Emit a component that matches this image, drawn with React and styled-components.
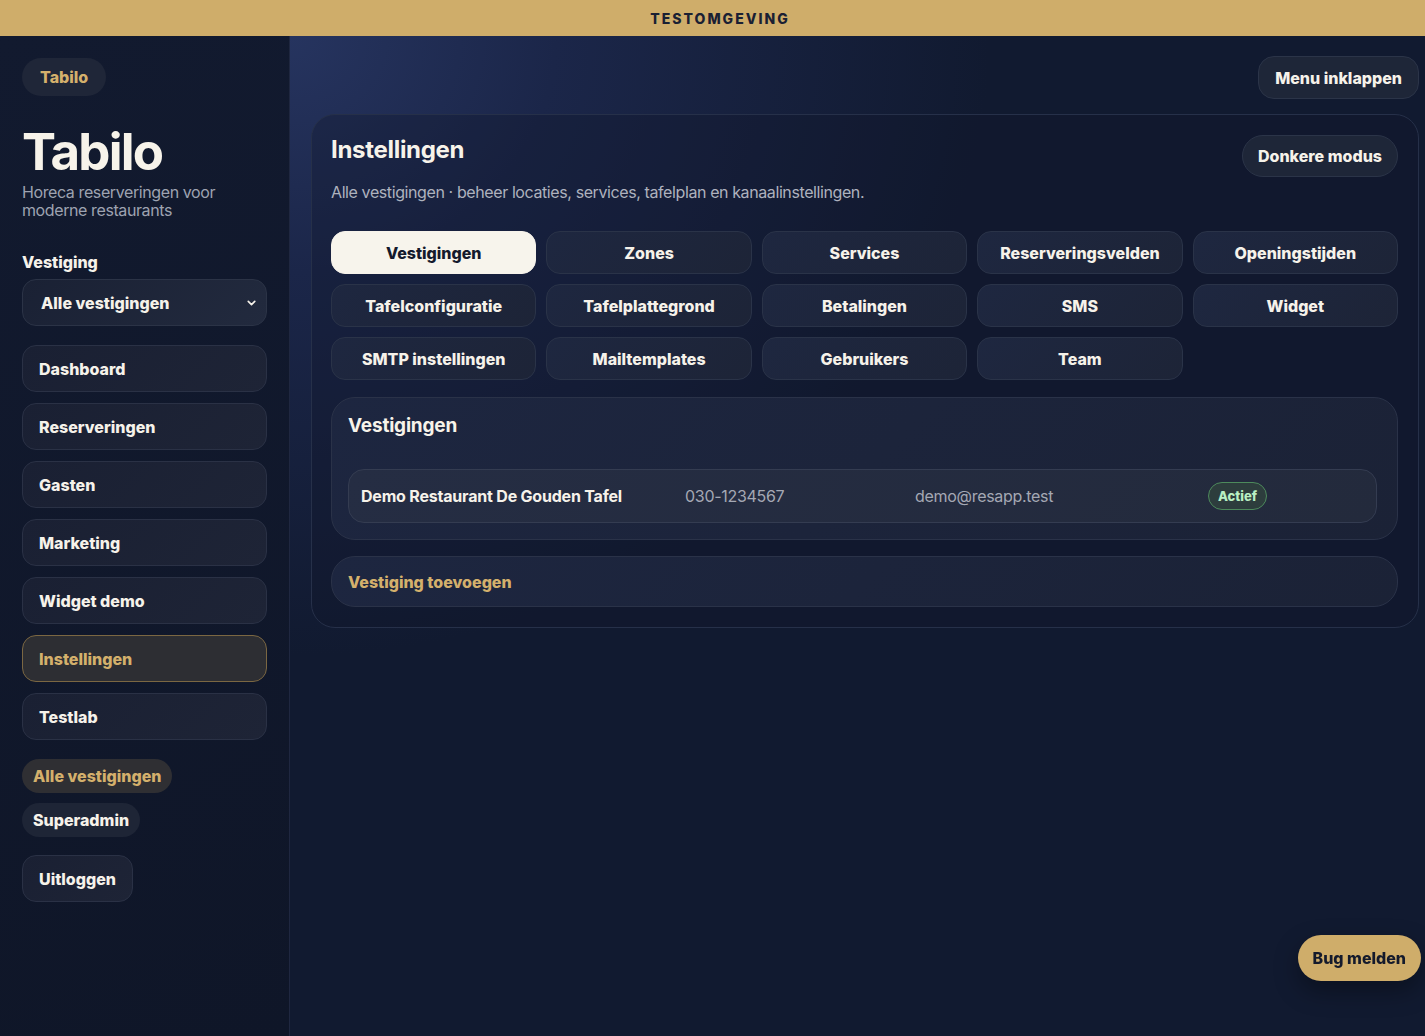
import React from 'react'
import styled, { createGlobalStyle } from 'styled-components'
import { ChevronDown } from 'lucide-react'

const GlobalStyle = createGlobalStyle`
  * { box-sizing: border-box; }
  html, body {
    margin: 0;
    padding: 0;
    background: #111a30;
    font-family: Inter, "Noto Sans", "Liberation Sans", sans-serif;
    color: #f6f2ea;
  }
  button, select { font-family: inherit; }
`

const Page = styled.div`
  min-height: 1036px;
  display: flex;
  flex-direction: column;
`

const TestBanner = styled.div`
  height: 36px;
  flex-shrink: 0;
  background: #cfad6a;
  color: #1a2033;
  font-size: 14px;
  font-weight: 800;
  letter-spacing: 2px;
  display: flex;
  align-items: center;
  justify-content: center;
  padding-left: 15px;
`

const Shell = styled.div`
  flex: 1;
  display: grid;
  grid-template-columns: 290px 1fr;
`

const Sidebar = styled.aside`
  background: linear-gradient(160deg, #121a2f 0%, #0f1628 100%);
  border-right: 1px solid #1f2740;
  padding: 22px 22px 0 22px;
  display: flex;
  flex-direction: column;
`

const BrandPill = styled.div`
  align-self: flex-start;
  height: 38px;
  padding: 0 18px;
  border-radius: 19px;
  background: #1f2638;
  color: #d4b06c;
  font-size: 16px;
  font-weight: 800;
  display: flex;
  align-items: center;
`

const BrandTitle = styled.h1`
  margin: 28px 0 0 0;
  font-size: 51px;
  line-height: 56px;
  font-weight: 700;
  letter-spacing: -1.8px;
  color: #f7f3ea;
`

const BrandSub = styled.p`
  margin: 3px 0 0 0;
  font-size: 16px;
  line-height: 18px;
  letter-spacing: -0.4px;
  color: #9ea3b1;
`

const FieldLabel = styled.div`
  margin-top: 33px;
  font-size: 16px;
  font-weight: 800;
  color: #f6f2ea;
`

const SelectWrap = styled.div`
  position: relative;
  margin-top: 7px;
`

const LocationSelect = styled.select`
  appearance: none;
  width: 100%;
  height: 47px;
  border-radius: 14px;
  border: 1px solid #2b3346;
  background: linear-gradient(135deg, #1a2134 0%, #222a3e 100%);
  color: #f6f2ea;
  font-size: 16px;
  font-weight: 800;
  padding: 0 18px;
  outline: none;
`

const SelectChevron = styled.span`
  position: absolute;
  right: 9px;
  top: 50%;
  transform: translateY(-50%);
  display: flex;
  color: #f6f2ea;
  pointer-events: none;
`

const NavList = styled.nav`
  margin-top: 19px;
  display: flex;
  flex-direction: column;
  gap: 11px;
`

const NavButton = styled.button`
  height: 47px;
  border-radius: 14px;
  border: 1px solid ${p => (p.$active ? '#7b6742' : '#2a3145')};
  background: ${p => (p.$active ? '#2d2e33' : 'linear-gradient(135deg, #1a2033 0%, #1e2436 100%)')};
  color: ${p => (p.$active ? '#d4b06c' : '#f6f2ea')};
  font-size: 16px;
  font-weight: 800;
  text-align: left;
  padding: 0 16px;
`

const RoleList = styled.div`
  margin-top: 19px;
  display: flex;
  flex-direction: column;
  align-items: flex-start;
  gap: 10px;
`

const RolePill = styled.span`
  height: 34px;
  padding: 0 11px;
  border-radius: 17px;
  background: ${p => (p.$gold ? '#2f2f33' : '#1e2536')};
  color: ${p => (p.$gold ? '#d4b06c' : '#f6f2ea')};
  font-size: 16px;
  font-weight: 800;
  display: flex;
  align-items: center;
`

const LogoutButton = styled(NavButton)`
  align-self: flex-start;
  margin-top: 18px;
  padding: 0 16px;
`

const Main = styled.main`
  background:
    radial-gradient(ellipse 700px 620px at 0% 0%, #26345f 0%, #1b2649 38%, rgba(17, 26, 48, 0) 100%),
    #111a30;
  padding: 20px 6px 40px 21px;
  display: flex;
  flex-direction: column;
`

const TopActions = styled.div`
  display: flex;
  justify-content: flex-end;
`

const GhostButton = styled.button`
  height: ${p => p.$h || 43}px;
  padding: 0 ${p => p.$px || 15}px;
  border-radius: ${p => (p.$pill ? 21 : 16)}px;
  border: 1px solid #2b3448;
  background: #1e2638;
  color: #f6f2ea;
  font-size: 16px;
  font-weight: 800;
`

const Card = styled.section`
  margin-top: 15px;
  border-radius: 24px;
  border: 1px solid #263049;
  background: rgba(17, 24, 44, 0.35);
  padding: 20px 20px 20px 19px;
`

const CardHeader = styled.div`
  display: flex;
  justify-content: space-between;
  align-items: flex-start;
`

const CardTitle = styled.h2`
  margin: 0;
  font-size: 24px;
  line-height: 30px;
  font-weight: 700;
  letter-spacing: -0.3px;
  color: #f7f3ea;
`

const CardSub = styled.p`
  margin: 5px 0 0 0;
  font-size: 16px;
  line-height: 20px;
  letter-spacing: -0.4px;
  color: #aeb2be;
`

const TabGrid = styled.div`
  margin-top: 29px;
  display: grid;
  grid-template-columns: repeat(5, 1fr);
  gap: 10px;
`

const Tab = styled.button`
  height: 43px;
  border-radius: 14px;
  border: 1px solid ${p => (p.$active ? '#f7f3eb' : '#2a3348')};
  background: ${p => (p.$active ? '#f7f4ec' : 'linear-gradient(135deg, #1e2740 0%, #1d2437 100%)')};
  color: ${p => (p.$active ? '#141a2c' : '#f6f2ea')};
  font-size: 16px;
  font-weight: 800;
`

const Section = styled.div`
  margin-top: 17px;
  border-radius: 24px;
  border: 1px solid #2a3248;
  background: linear-gradient(135deg, #1d2640 0%, #1b2236 100%);
  padding: 16px 20px 16px 16px;
`

const SectionTitle = styled.h3`
  margin: 0;
  font-size: 19px;
  line-height: 24px;
  font-weight: 700;
  letter-spacing: -0.2px;
  color: #f7f3ea;
`

const LocationRow = styled.div`
  margin-top: 31px;
  height: 54px;
  border-radius: 16px;
  border: 1px solid #343c51;
  background: linear-gradient(135deg, #252d43 0%, #232a3c 100%);
  padding: 0 12px;
  display: grid;
  grid-template-columns: 324px 230px 293px 1fr;
  align-items: center;
`

const RowName = styled.span`
  font-size: 16px;
  font-weight: 700;
  letter-spacing: -0.2px;
  color: #f6f2ea;
`

const RowMeta = styled.span`
  font-size: 16px;
  letter-spacing: -0.3px;
  color: #a4a8b4;
`

const StatusBadge = styled.span`
  justify-self: start;
  height: 28px;
  padding: 0 9px;
  border-radius: 14px;
  border: 1px solid #4d8a5c;
  background: #2d3d3d;
  color: #b9f0c4;
  font-size: 13px;
  font-weight: 800;
  display: flex;
  align-items: center;
`

const AddBox = styled.div`
  margin-top: 16px;
  height: 51px;
  border-radius: 24px;
  border: 1px solid #2a3248;
  background: linear-gradient(135deg, #1d2640 0%, #1b2236 100%);
  padding: 0 16px;
  display: flex;
  align-items: center;
  color: #d4b06c;
  font-size: 16px;
  font-weight: 800;
`

const BugButton = styled.button`
  position: fixed;
  right: 4px;
  bottom: 55px;
  height: 46px;
  padding: 0 15px;
  border-radius: 23px;
  border: none;
  background: #cfad6a;
  color: #141a2c;
  font-size: 16px;
  font-weight: 800;
  box-shadow: 0 10px 24px rgba(0, 0, 0, 0.35);
`

const navItems = ['Dashboard', 'Reserveringen', 'Gasten', 'Marketing', 'Widget demo', 'Instellingen', 'Testlab']

const tabs = [
  'Vestigingen', 'Zones', 'Services', 'Reserveringsvelden', 'Openingstijden',
  'Tafelconfiguratie', 'Tafelplattegrond', 'Betalingen', 'SMS', 'Widget',
  'SMTP instellingen', 'Mailtemplates', 'Gebruikers', 'Team',
]

export default function App() {
  return (
    <Page>
      <GlobalStyle />
      <TestBanner>TESTOMGEVING</TestBanner>
      <Shell>
        <Sidebar>
          <BrandPill>Tabilo</BrandPill>
          <BrandTitle>Tabilo</BrandTitle>
          <BrandSub>Horeca reserveringen voor<br />moderne restaurants</BrandSub>

          <FieldLabel>Vestiging</FieldLabel>
          <SelectWrap>
            <LocationSelect defaultValue="all">
              <option value="all">Alle vestigingen</option>
              <option value="demo">Demo Restaurant De Gouden Tafel</option>
            </LocationSelect>
            <SelectChevron><ChevronDown size={13} strokeWidth={3} /></SelectChevron>
          </SelectWrap>

          <NavList>
            {navItems.map(item => (
              <NavButton key={item} $active={item === 'Instellingen'}>{item}</NavButton>
            ))}
          </NavList>

          <RoleList>
            <RolePill $gold>Alle vestigingen</RolePill>
            <RolePill>Superadmin</RolePill>
          </RoleList>

          <LogoutButton>Uitloggen</LogoutButton>
        </Sidebar>

        <Main>
          <TopActions>
            <GhostButton $px={16}>Menu inklappen</GhostButton>
          </TopActions>

          <Card>
            <CardHeader>
              <CardTitle>Instellingen</CardTitle>
              <GhostButton $pill $h={42}>Donkere modus</GhostButton>
            </CardHeader>
            <CardSub>Alle vestigingen · beheer locaties, services, tafelplan en kanaalinstellingen.</CardSub>

            <TabGrid>
              {tabs.map(tab => (
                <Tab key={tab} $active={tab === 'Vestigingen'}>{tab}</Tab>
              ))}
            </TabGrid>

            <Section>
              <SectionTitle>Vestigingen</SectionTitle>
              <LocationRow>
                <RowName>Demo Restaurant De Gouden Tafel</RowName>
                <RowMeta>030-1234567</RowMeta>
                <RowMeta>demo@resapp.test</RowMeta>
                <StatusBadge>Actief</StatusBadge>
              </LocationRow>
            </Section>

            <AddBox>Vestiging toevoegen</AddBox>
          </Card>
        </Main>
      </Shell>
      <BugButton>Bug melden</BugButton>
    </Page>
  )
}
